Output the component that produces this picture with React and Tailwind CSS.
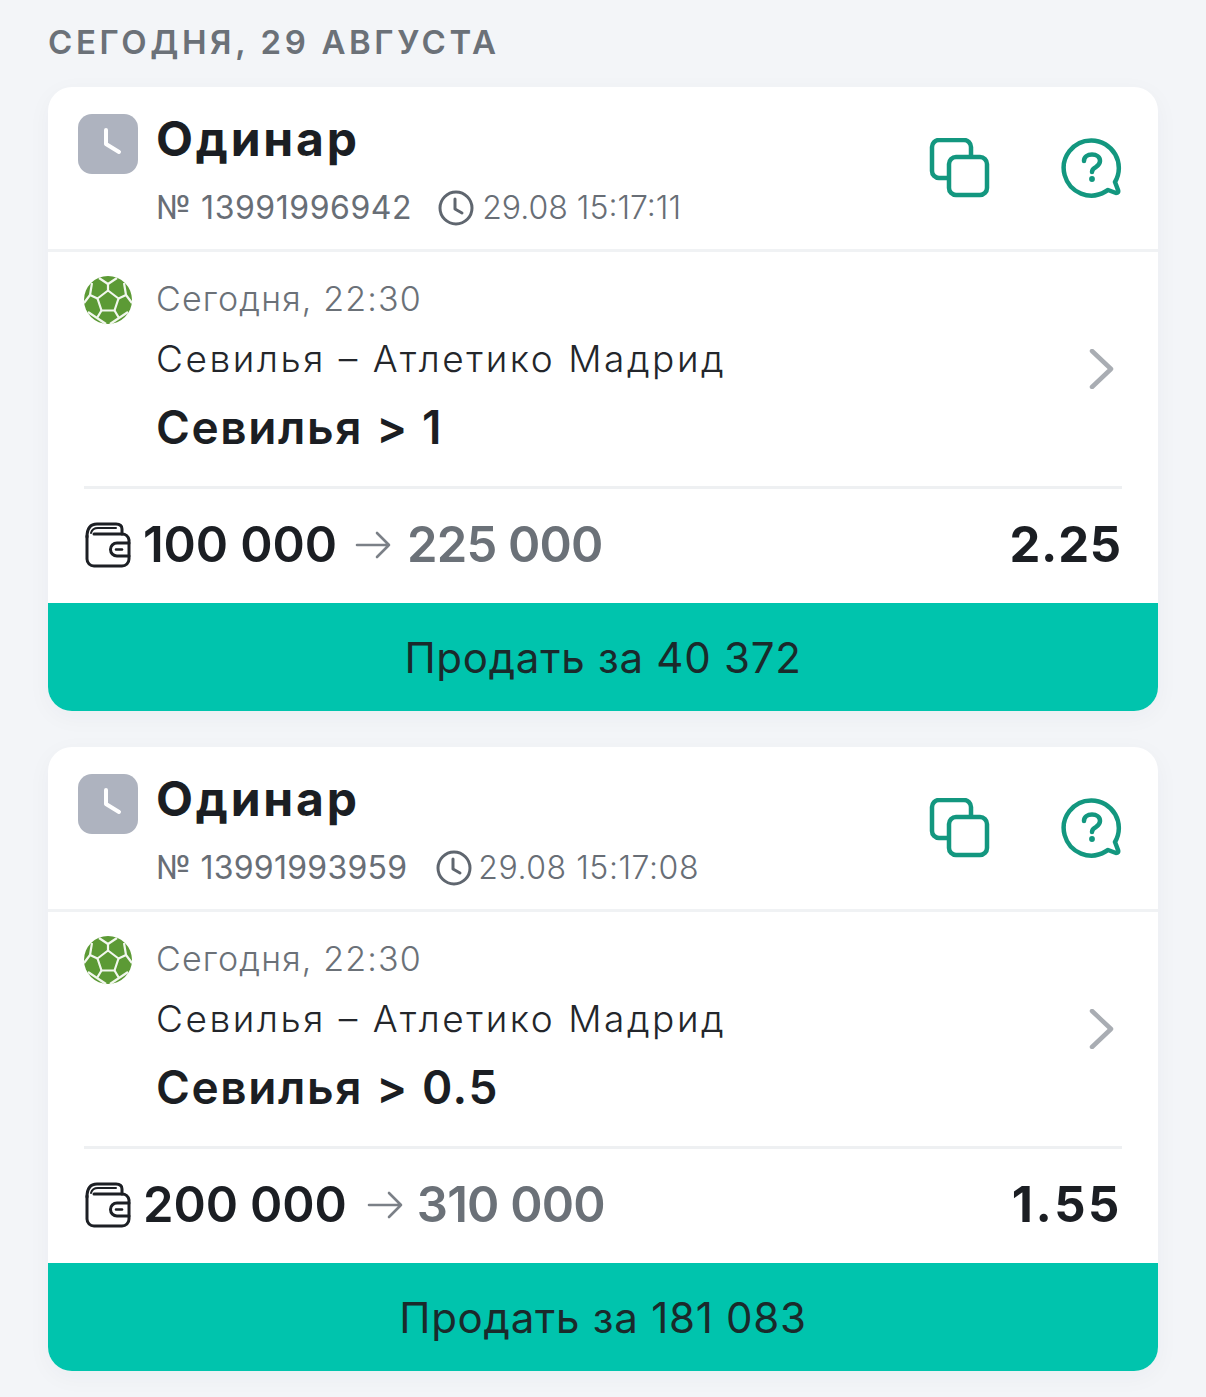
const font = { fontFamily: '"Inter", "Noto Sans", sans-serif' };

function ClockBadge() {
  return (
    <div className="w-[60px] h-[60px] rounded-[14px] bg-[#aeb3bf] flex items-center justify-center shrink-0">
      <svg width="60" height="60" viewBox="0 0 60 60" fill="none">
        <path d="M28 16V30L41 38" stroke="#fff" strokeWidth="4" strokeLinecap="round" strokeLinejoin="round" />
      </svg>
    </div>
  );
}

function CopyIcon() {
  return (
    <svg width="62" height="62" viewBox="0 0 62 62" fill="none" stroke="#13977f" strokeWidth="4.5">
      <path d="M20 40H10a7 7 0 0 1-7-7V9a7 7 0 0 1 7-7h25a7 7 0 0 1 7 7v10" />
      <rect x="20" y="19" width="38" height="38" rx="7" />
    </svg>
  );
}

function HelpIcon() {
  return (
    <svg width="62" height="62" viewBox="0 0 62 62" fill="none" stroke="#13977f" strokeWidth="4.5" strokeLinecap="round" strokeLinejoin="round">
      <path d="M30.5 2.5A27.5 27.5 0 1 0 44.5 53.5L47 52L55 55Q58 55 57 52L54 44A27.5 27.5 0 0 0 30.5 2.5Z" />
      <path d="M23 23c0-4 3.5-6.5 8-6.5s8 2.5 8 6.5c0 3-2 4.5-4 6-3 1.5-4 2.5-4 5" strokeWidth="4.5" />
      <circle cx="31" cy="41" r="1.4" fill="#13977f" strokeWidth="3" />
    </svg>
  );
}

function SmallClock() {
  return (
    <svg width="36" height="36" viewBox="0 0 36 36" fill="none" stroke="#5f666f" strokeWidth="3" strokeLinecap="round" strokeLinejoin="round">
      <circle cx="18" cy="18" r="16" />
      <path d="M17 9V19L24 23" />
    </svg>
  );
}

function Ball() {
  return (
    <svg width="50" height="50" viewBox="0 0 50 50" className="shrink-0 mt-[-2px]">
      <circle cx="25" cy="25" r="24" fill="#5c9a35" />
      <g fill="none" stroke="#f2f7ee" strokeWidth="2.2" strokeLinejoin="round">
        <path d="M25 15.5L35.5 23.5L31.5 35.5H18.5L14.5 23.5Z" />
        <path d="M25 15.5V9M35.5 23.5L43 20M31.5 35.5L36 43M18.5 35.5L14 43M14.5 23.5L7 20" />
        <path d="M25 9L16 3M25 9L34 3M43 20L41 8M43 20L49 28M36 43L45 37M36 43L27 49M14 43L5 37M14 43L23 49M7 20L9 8M7 20L1 28" />
      </g>
    </svg>
  );
}

function Wallet() {
  return (
    <svg width="46" height="46" viewBox="0 0 46 46" fill="none" stroke="#1c1f24" strokeWidth="3" strokeLinecap="round" strokeLinejoin="round">
      <path d="M2 14V37a7 7 0 0 0 7 7H37a7 7 0 0 0 7-7V18a7 7 0 0 0-7-6H9" />
      <path d="M2 15C2 6 6 2 12 2H31c4 0 6 2 6 5v5" />
      <path d="M6 11c1-4 3-5 7-5H31" strokeWidth="2" />
      <path d="M44 21H32a6 6 0 0 0 0 13H44" />
      <path d="M31 27.5H37" strokeWidth="2.5" />
    </svg>
  );
}

function ChevronR() {
  return (
    <svg width="26" height="40" viewBox="0 0 26 40" fill="none" stroke="#a9adb3" strokeWidth="4.5" strokeLinecap="round" strokeLinejoin="round">
      <path d="M3 2L22 20L3 38" />
    </svg>
  );
}

function Arrow() {
  return (
    <svg width="36" height="28" viewBox="0 0 36 28" fill="none" stroke="#7b8087" strokeWidth="2.6" strokeLinecap="round" strokeLinejoin="round">
      <path d="M2 14H34M22 2L34 14L22 26" />
    </svg>
  );
}

function BetCard({ number, time, pick, stake, win, odds, sell, numTrack, timeTrack, oddsTrack, clockGap, arrowGap }) {
  return (
    <div className="bg-white rounded-[24px] overflow-hidden shadow-[0_6px_24px_rgba(30,50,80,0.04)]">
      <div className="h-[165px] flex justify-between border-b-[3px] border-[#f0f2f4] pl-[30px] pr-[35px]">
        <div className="flex gap-[18px] pt-[27px]">
          <ClockBadge />
          <div>
            <div className="mt-[-1px] text-[48px] leading-[52px] font-bold text-[#1b1e23] tracking-[2.8px]">Одинар</div>
            <div className="mt-[25px] flex items-center text-[32px] leading-[36px] text-[#686e76]">
              <span className={`${numTrack} font-normal`}>№ {number}</span>
              <span className={`${clockGap} flex`}><SmallClock /></span>
              <span className={`${timeTrack} font-light`}>29.08 {time}</span>
            </div>
          </div>
        </div>
        <div className="flex gap-[70px] pt-[51px]">
          <CopyIcon />
          <HelpIcon />
        </div>
      </div>
      <div className="h-[234px] px-[35px] pt-[25px] flex items-center justify-between">
        <div className="flex gap-[23px] h-full">
          <Ball />
          <div>
            <div className="text-[34px] leading-[44px] font-light text-[#6b7178] tracking-[1.15px]">Сегодня, 22:30</div>
            <div className="mt-[16px] text-[37px] leading-[44px] font-light text-[#23262b] tracking-[2.55px]">Севилья – Атлетико Мадрид</div>
            <div className="mt-[20px] text-[46px] leading-[52px] font-semibold text-[#1b1e23] tracking-[1.6px]">{pick}</div>
          </div>
        </div>
        <div className="mt-[-26px] mr-[8px] flex"><ChevronR /></div>
      </div>
      <div className="mx-[36px] border-t-[3px] border-[#eef0f2] h-[117px] pb-[2px] flex items-center justify-between">
        <div className="flex items-center">
          <span className="ml-[1px] flex"><Wallet /></span>
          <span className="ml-[12px] text-[49px] font-semibold text-[#1b1e23] tracking-[-0.1px] leading-[56px]">{stake}</span>
          <span className={`${arrowGap} flex`}><Arrow /></span>
          <span className="text-[49px] font-semibold text-[#6b7178] tracking-[-0.8px] leading-[56px]">{win}</span>
        </div>
        <span className={`${oddsTrack} text-[49px] font-bold text-[#1b1e23] leading-[56px]`}>{odds}</span>
      </div>
      <div className="h-[108px] bg-[#00c4ad] flex items-center justify-center text-[42px] font-normal text-[#1a2a2b] tracking-[0.75px]">
        Продать за {sell}
      </div>
    </div>
  );
}

export default function App() {
  return (
    <div style={font} className="w-[1206px] h-[1397px] overflow-hidden bg-[#f3f5f8] px-[48px] pt-[22px]">
      <div className="text-[33px] leading-[40px] font-semibold text-[#6b7178] tracking-[3.6px]">СЕГОДНЯ, 29 АВГУСТА</div>
      <div className="mt-[25px] flex flex-col gap-[36px]">
        <BetCard number="13991996942" time="15:17:11" pick="Севилья > 1" stake="100 000" win="225 000" odds="2.25" sell="40 372" numTrack="tracking-[0.55px]" timeTrack="tracking-[0px]" oddsTrack="tracking-[0.8px]" clockGap="ml-[26px] mr-[8px]" arrowGap="ml-[18px] mr-[16px]" />
        <BetCard number="13991993959" time="15:17:08" pick="Севилья > 0.5" stake="200 000" win="310 000" odds="1.55" sell="181 083" numTrack="tracking-[0.25px]" timeTrack="tracking-[0.55px]" oddsTrack="tracking-[2.6px]" clockGap="ml-[29px] mr-[6px]" arrowGap="ml-[20px] mr-[14px]" />
      </div>
    </div>
  );
}
